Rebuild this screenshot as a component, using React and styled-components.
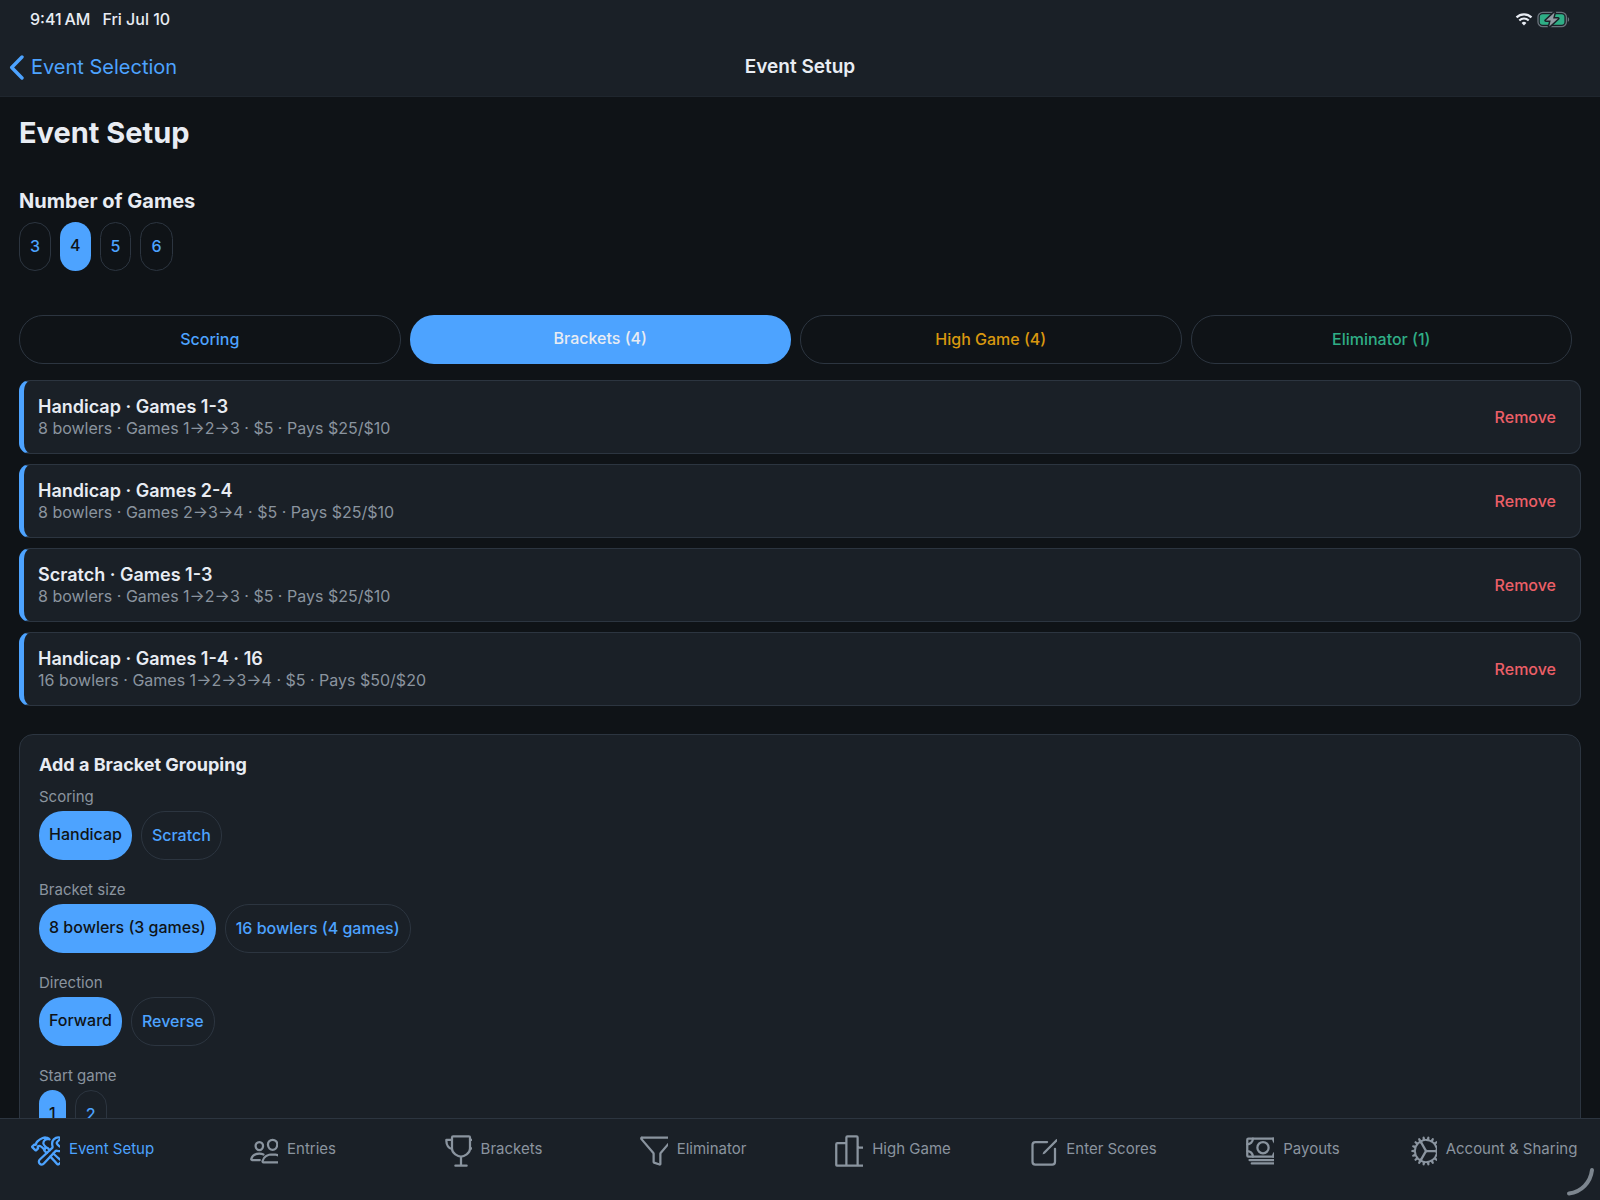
import React, { useState } from "react";
import styled, { createGlobalStyle } from "styled-components";
import {
  IoConstructOutline,
  IoPeopleOutline,
  IoTrophyOutline,
  IoFunnelOutline,
  IoPodiumOutline,
  IoCreateOutline,
  IoCashOutline,
  IoCogOutline,
} from "react-icons/io5";

const color = {
  page: "#0f1317",
  surface: "#1a2027",
  line: "#2c3540",
  text: "#e8ecf3",
  muted: "#8a949f",
  accent: "#4da3ff",
  amber: "#d9980f",
  green: "#2fae86",
  red: "#ec5f67",
};

const GlobalStyle = createGlobalStyle`
  *, *::before, *::after { box-sizing: border-box; }
  body {
    margin: 0;
    background: ${color.page};
    color: ${color.text};
    font-family: Inter, "Noto Sans", "Liberation Sans", sans-serif;
    font-size: 16px;
    line-height: 20px;
  }
  h1, h2, h3, p, ul { margin: 0; padding: 0; }
  button { font: inherit; cursor: pointer; }
  a { text-decoration: none; }
`;

const Screen = styled.div`
  height: 100vh;
  display: flex;
  flex-direction: column;
  overflow: hidden;
`;

const TopArea = styled.header`
  flex: none;
  background: ${color.surface};
  border-bottom: 1px solid #1f262e;
`;

const StatusBar = styled.div`
  display: flex;
  justify-content: space-between;
  align-items: center;
  height: 38px;
  padding: 0 30px;
`;

const StatusGroup = styled.div`
  display: flex;
  align-items: center;
  gap: ${(p) => p.$gap}px;
`;

const StatusText = styled.span`
  font-size: 16px;
  font-weight: 500;
`;

const NavBar = styled.div`
  display: grid;
  grid-template-columns: 1fr auto 1fr;
  align-items: center;
  height: 58px;
  padding: 0 9px;
`;

const BackLink = styled.a`
  display: flex;
  align-items: center;
  gap: 7px;
  color: ${color.accent};
  font-size: 20px;
`;

const NavTitle = styled.span`
  font-size: 19px;
  font-weight: 600;
`;

const Scroll = styled.main`
  flex: 1;
  min-height: 0;
  overflow-y: auto;
  scrollbar-width: none;
  padding: 18px 19px;
`;

const PageTitle = styled.h1`
  font-size: 29px;
  line-height: 36px;
  font-weight: 700;
`;

const SectionTitle = styled.h2`
  margin-top: 38px;
  font-size: 20px;
  line-height: 24px;
  font-weight: 700;
`;

const ChipRow = styled.div`
  display: flex;
  gap: 9px;
  margin-top: ${(p) => p.$top}px;
`;

const Chip = styled.button`
  height: 49px;
  padding: ${(p) => (p.$active ? "0 10px 4px" : "0 10px 2px")};
  border: ${(p) => (p.$active ? "0" : `1px solid ${color.line}`)};
  border-radius: 24px;
  background: ${(p) => (p.$active ? color.accent : "transparent")};
  color: ${(p) => (p.$active ? color.page : color.accent)};
  font-size: 16px;
  font-weight: 500;
`;

const Tabs = styled.div`
  display: grid;
  grid-template-columns: repeat(4, 1fr);
  gap: 9px;
  margin: 44px 9px 16px 0;
`;

const TabChip = styled(Chip)`
  color: ${(p) => (p.$active ? color.text : p.$tone)};
`;

const CardList = styled.ul`
  display: grid;
  gap: 10px;
  list-style: none;
`;

const Card = styled.li`
  display: flex;
  align-items: center;
  justify-content: space-between;
  height: 74px;
  padding: 0 24px 0 14px;
  border: 1px solid ${color.line};
  border-left: 5px solid ${color.accent};
  border-radius: 11px;
  background: ${color.surface};
`;

const CardTitle = styled.h3`
  font-size: 18px;
  line-height: 22px;
  font-weight: 600;
`;

const CardMeta = styled.p`
  color: ${color.muted};
  font-size: 16px;
  line-height: 20px;
`;

const RemoveButton = styled.button`
  padding: 0;
  border: 0;
  background: none;
  color: ${color.red};
  font-weight: 500;
`;

const Panel = styled.section`
  margin-top: 28px;
  padding: 18px 19px;
  border: 1px solid ${color.line};
  border-radius: 14px;
  background: ${color.surface};
`;

const PanelTitle = styled.h3`
  font-size: 18px;
  line-height: 24px;
  font-weight: 700;
`;

const Field = styled.div`
  margin-top: ${(p) => p.$top}px;
`;

const FieldLabel = styled.div`
  color: ${color.muted};
  font-size: 15px;
  line-height: 20px;
`;

const TabBar = styled.nav`
  flex: none;
  position: relative;
  display: grid;
  grid-template-columns: repeat(8, 1fr);
  align-items: start;
  height: 82px;
  padding-top: 14px;
  border-top: 1px solid ${color.line};
  background: ${color.surface};
`;

const TabLink = styled.a`
  display: flex;
  align-items: center;
  justify-content: center;
  gap: 9px;
  padding-right: 15px;
  color: ${(p) => (p.$active ? color.accent : color.muted)};
  font-size: 15px;
  white-space: nowrap;
`;

const TabIcon = styled.span`
  flex: none;
  width: 29px;
  height: 36px;
  overflow: hidden;

  svg {
    display: block;
    width: 36px;
    height: 36px;
  }
`;

const TabLabel = styled.span`
  padding-bottom: 4px;
`;

const CornerArc = styled.svg`
  position: absolute;
  right: 5px;
  bottom: 4px;
  width: 29px;
  height: 29px;
`;

function Wifi() {
  return (
    <svg width="18" height="13" viewBox="0 0 18 13" fill="none" aria-hidden="true">
      <path d="M1.5 4.4a10.8 10.8 0 0 1 15 0" stroke={color.text} strokeWidth="2.2" />
      <path d="M4.3 7.4a6.8 6.8 0 0 1 9.4 0" stroke={color.text} strokeWidth="2.1" />
      <path d="M9 12.4 6.6 9.9a3.6 3.6 0 0 1 4.8 0Z" fill={color.text} />
    </svg>
  );
}

const boltPath = "M17.6 1.4 8.8 9.6h4.9l-1.5 6 8.9-8.2h-5Z";

function Battery() {
  return (
    <svg width="33" height="17" viewBox="0 0 33 17" fill="none" aria-hidden="true">
      <rect x="1" y="1.3" width="28.4" height="14.4" rx="4.8" stroke="#69727b" strokeWidth="1.3" />
      <rect x="2.8" y="3.2" width="24.6" height="10.6" rx="2.8" fill={color.green} />
      <path d="M30.8 6.2c1.8.6 1.8 4 0 4.6Z" fill="#69727b" />
      <path d={boltPath} stroke={color.surface} strokeWidth="3" strokeLinejoin="round" />
      <path d={boltPath} fill="#939ba3" />
    </svg>
  );
}

function BackChevron() {
  return (
    <svg width="15" height="25" viewBox="0 0 15 25" fill="none" aria-hidden="true">
      <path d="M13 2 2.7 12.5 13 23" stroke={color.accent} strokeWidth="3.4" strokeLinecap="round" strokeLinejoin="round" />
    </svg>
  );
}

function ChipGroup({ label, options, initial, top }) {
  const [value, setValue] = useState(initial);
  return (
    <ChipRow role="group" aria-label={label} $top={top}>
      {options.map((option) => (
        <Chip
          key={option}
          type="button"
          $active={option === value}
          aria-pressed={option === value}
          onClick={() => setValue(option)}
        >
          {option}
        </Chip>
      ))}
    </ChipRow>
  );
}

const tabs = [
  { label: "Scoring", tone: color.accent },
  { label: "Brackets (4)", tone: color.accent },
  { label: "High Game (4)", tone: color.amber },
  { label: "Eliminator (1)", tone: color.green },
];

const groupings = [
  { title: "Handicap · Games 1-3", meta: "8 bowlers · Games 1→2→3 · $5 · Pays $25/$10" },
  { title: "Handicap · Games 2-4", meta: "8 bowlers · Games 2→3→4 · $5 · Pays $25/$10" },
  { title: "Scratch · Games 1-3", meta: "8 bowlers · Games 1→2→3 · $5 · Pays $25/$10" },
  { title: "Handicap · Games 1-4 · 16", meta: "16 bowlers · Games 1→2→3→4 · $5 · Pays $50/$20" },
];

const fields = [
  { label: "Scoring", options: ["Handicap", "Scratch"] },
  { label: "Bracket size", options: ["8 bowlers (3 games)", "16 bowlers (4 games)"] },
  { label: "Direction", options: ["Forward", "Reverse"] },
  { label: "Start game", options: ["1", "2"] },
];

const navItems = [
  { label: "Event Setup", Icon: IoConstructOutline },
  { label: "Entries", Icon: IoPeopleOutline },
  { label: "Brackets", Icon: IoTrophyOutline },
  { label: "Eliminator", Icon: IoFunnelOutline },
  { label: "High Game", Icon: IoPodiumOutline },
  { label: "Enter Scores", Icon: IoCreateOutline },
  { label: "Payouts", Icon: IoCashOutline },
  { label: "Account & Sharing", Icon: IoCogOutline },
];

export default function App() {
  const [tab, setTab] = useState("Brackets (4)");
  return (
    <>
      <GlobalStyle />
      <Screen>
        <TopArea>
          <StatusBar>
            <StatusGroup $gap={12}>
              <StatusText>9:41{"\u2009"}AM</StatusText>
              <StatusText>Fri Jul 10</StatusText>
            </StatusGroup>
            <StatusGroup $gap={4}>
              <Wifi />
              <Battery />
            </StatusGroup>
          </StatusBar>
          <NavBar>
            <BackLink href="#events">
              <BackChevron />
              Event Selection
            </BackLink>
            <NavTitle>Event Setup</NavTitle>
          </NavBar>
        </TopArea>

        <Scroll>
          <PageTitle>Event Setup</PageTitle>
          <SectionTitle>Number of Games</SectionTitle>
          <ChipGroup label="Number of Games" options={["3", "4", "5", "6"]} initial="4" top={9} />

          <Tabs role="tablist">
            {tabs.map(({ label, tone }) => (
              <TabChip
                key={label}
                type="button"
                role="tab"
                aria-selected={label === tab}
                $active={label === tab}
                $tone={tone}
                onClick={() => setTab(label)}
              >
                {label}
              </TabChip>
            ))}
          </Tabs>

          <CardList>
            {groupings.map(({ title, meta }) => (
              <Card key={title}>
                <div>
                  <CardTitle>{title}</CardTitle>
                  <CardMeta>{meta}</CardMeta>
                </div>
                <RemoveButton type="button">Remove</RemoveButton>
              </Card>
            ))}
          </CardList>

          <Panel>
            <PanelTitle>Add a Bracket Grouping</PanelTitle>
            {fields.map(({ label, options }, index) => (
              <Field key={label} $top={index === 0 ? 10 : 20}>
                <FieldLabel>{label}</FieldLabel>
                <ChipGroup label={label} options={options} initial={options[0]} top={4} />
              </Field>
            ))}
          </Panel>
        </Scroll>

        <TabBar aria-label="Main">
          {navItems.map(({ label, Icon }, index) => (
            <TabLink key={label} href="#" $active={index === 0}>
              <TabIcon>
                <Icon aria-hidden="true" />
              </TabIcon>
              <TabLabel>{label}</TabLabel>
            </TabLink>
          ))}
          <CornerArc viewBox="0 0 29 29" fill="none" aria-hidden="true">
            <path d="M26 3C24.5 15.5 15.5 25 3 26.5" stroke="#7d868f" strokeWidth="4" strokeLinecap="round" />
          </CornerArc>
        </TabBar>
      </Screen>
    </>
  );
}
